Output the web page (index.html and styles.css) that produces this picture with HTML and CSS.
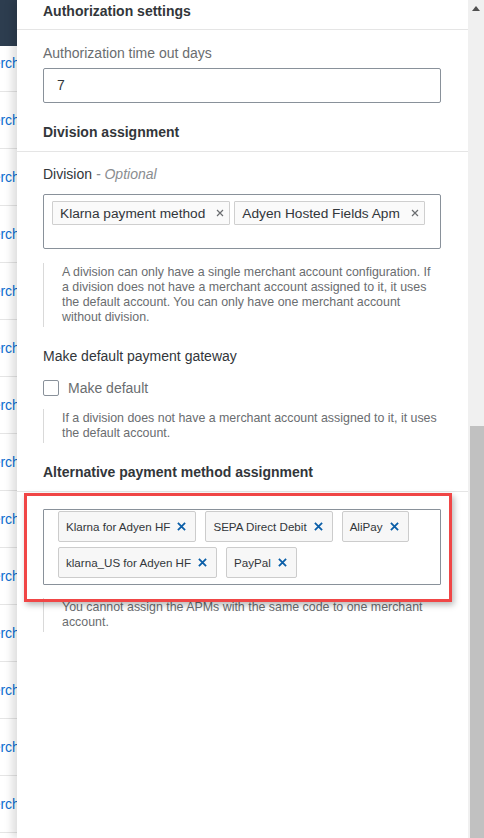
FILE: index.html
```html
<!DOCTYPE html>
<html lang="en">
<head>
<meta charset="utf-8">
<title>Payment gateway settings</title>
<link rel="stylesheet" href="styles.css">
</head>
<body>
<div class="page">
  <div class="page-header"></div>
  <div class="list">
    <div class="list-row first"><a class="link">Merchant account</a></div>
    <div class="list-row"><a class="link">Merchant account</a></div>
    <div class="list-row"><a class="link">Merchant account</a></div>
    <div class="list-row"><a class="link">Merchant account</a></div>
    <div class="list-row"><a class="link">Merchant account</a></div>
    <div class="list-row"><a class="link">Merchant account</a></div>
    <div class="list-row"><a class="link">Merchant account</a></div>
    <div class="list-row"><a class="link">Merchant account</a></div>
    <div class="list-row"><a class="link">Merchant account</a></div>
    <div class="list-row"><a class="link">Merchant account</a></div>
    <div class="list-row"><a class="link">Merchant account</a></div>
    <div class="list-row"><a class="link">Merchant account</a></div>
    <div class="list-row"><a class="link">Merchant account</a></div>
    <div class="list-row"><a class="link">Merchant account</a></div>
  </div>
</div>

<aside class="panel">
  <div class="panel-content">
    <h3 class="section-head first">Authorization settings</h3>
    <div class="section-body">
      <label class="field-label muted top">Authorization time out days</label>
      <div class="input">7</div>
    </div>

    <h3 class="section-head">Division assignment</h3>
    <div class="section-body">
      <label class="field-label division">Division <span class="optional">- Optional</span></label>
      <div class="multi-input">
        <span class="token">Klarna payment method
          <svg class="x-small" viewBox="0 0 8 8"><path d="M1 1L7 7M7 1L1 7"/></svg>
        </span>
        <span class="token">Adyen Hosted Fields Apm
          <svg class="x-small" viewBox="0 0 8 8"><path d="M1 1L7 7M7 1L1 7"/></svg>
        </span>
      </div>
      <p class="helper first-helper">A division can only have a single merchant account configuration. If a division does not have a merchant account assigned to it, it uses the default account. You can only have one merchant account without division.</p>

      <label class="field-label gateway">Make default payment gateway</label>
      <div class="check-row">
        <span class="checkbox"></span>
        <span class="check-text">Make default</span>
      </div>
      <p class="helper second-helper">If a division does not have a merchant account assigned to it, it uses the default account.</p>
    </div>

    <h3 class="section-head apm">Alternative payment method assignment</h3>
    <div class="section-body">
      <div class="apm-input">
        <span class="apm-token">Klarna for Adyen HF <svg class="x-blue" viewBox="0 0 10 10"><path d="M1 1L9 9M9 1L1 9"/></svg></span>
        <span class="apm-token">SEPA Direct Debit <svg class="x-blue" viewBox="0 0 10 10"><path d="M1 1L9 9M9 1L1 9"/></svg></span>
        <span class="apm-token">AliPay <svg class="x-blue" viewBox="0 0 10 10"><path d="M1 1L9 9M9 1L1 9"/></svg></span>
        <span class="apm-token">klarna_US for Adyen HF <svg class="x-blue" viewBox="0 0 10 10"><path d="M1 1L9 9M9 1L1 9"/></svg></span>
        <span class="apm-token">PayPal <svg class="x-blue" viewBox="0 0 10 10"><path d="M1 1L9 9M9 1L1 9"/></svg></span>
      </div>
      <p class="helper third-helper">You cannot assign the APMs with the same code to one merchant account.</p>
    </div>

    <div class="highlight"></div>
  </div>
  <div class="scrollbar">
    <svg class="scroll-arrow" viewBox="0 0 10 6"><path d="M5 0L10 6H0Z"/></svg>
    <div class="scroll-thumb"></div>
  </div>
</aside>
</body>
</html>
```
FILE: styles.css
```css
* { box-sizing: border-box; }

html, body {
  margin: 0;
  padding: 0;
  height: 100%;
}

body {
  font-family: "Liberation Sans", Arial, sans-serif;
  color: #32363a;
  background: #ffffff;
  overflow: hidden;
  position: relative;
}

/* background page */
.page {
  width: 100%;
}

.page-header {
  height: 46px;
  background: #2d3d4f;
}

.list-row {
  height: 57px;
  border-bottom: 1px solid #e5e5e5;
  display: flex;
  align-items: center;
  overflow: hidden;
  white-space: nowrap;
}

.list-row.first {
  height: 46px;
  align-items: flex-start;
  padding-top: 7px;
}

.link {
  margin-left: -19px;
  color: #0a6ed1;
  font-size: 14px;
  line-height: 20px;
}

/* side panel */
.panel {
  position: absolute;
  top: 0;
  left: 17px;
  right: 0;
  bottom: 0;
  display: flex;
  background: #ffffff;
  box-shadow: -5px 0 8px rgba(0, 0, 0, 0.13);
}

.panel-content {
  flex: 1;
  position: relative;
  overflow: hidden;
}

.section-head {
  margin: 19px 0 0;
  padding: 0 26px 9px;
  font-size: 14px;
  line-height: 20px;
  font-weight: bold;
  color: #32363a;
  border-bottom: 1px solid #e5e5e5;
}

.section-head.first {
  margin-top: 0;
  padding-top: 1px;
  padding-bottom: 8px;
}

.section-body {
  padding: 0 27px 0 26px;
}

.field-label {
  display: block;
  font-size: 14px;
  line-height: 20px;
  color: #32363a;
}

.field-label.muted { color: #6a6d70; }
.field-label.top { margin-top: 13px; }
.field-label.division { margin-top: 12px; }
.field-label.gateway { margin-top: 19px; }

.optional {
  font-style: italic;
  color: #8a8d90;
}

.input {
  margin-top: 5px;
  height: 35px;
  border: 1px solid #89919a;
  border-radius: 2px;
  padding-left: 13px;
  font-size: 14px;
  line-height: 33px;
  color: #32363a;
}

.multi-input {
  margin-top: 10px;
  height: 55px;
  border: 1px solid #89919a;
  border-radius: 2px;
  padding: 6px 8px;
  display: flex;
  flex-wrap: wrap;
  align-content: flex-start;
  gap: 4px;
}

.token {
  height: 24px;
  display: inline-flex;
  align-items: center;
  gap: 11px;
  padding: 0 5px 0 7px;
  background: #fafafa;
  border: 1px solid #cfcfcf;
  border-radius: 1px;
  font-size: 13.7px;
  color: #32363a;
}

.x-small {
  width: 8px;
  height: 8px;
  stroke: #6a6d70;
  stroke-width: 1.2;
  fill: none;
}

.helper {
  margin: 14px 0 0;
  padding: 2px 3px 2px 18px;
  border-left: 1px solid #d9d9d9;
  font-size: 12.4px;
  line-height: 15px;
  color: #6a6d70;
}

.second-helper { margin-top: 11px; }
.third-helper { margin-top: 13px; }

.check-row {
  margin-top: 12px;
  display: flex;
  align-items: center;
  height: 20px;
}

.checkbox {
  width: 16px;
  height: 16px;
  border: 1px solid #89919a;
  border-radius: 2px;
  background: #ffffff;
}

.check-text {
  margin-left: 9px;
  font-size: 14px;
  line-height: 20px;
  color: #6a6d70;
}

.apm-input {
  margin-top: 17px;
  height: 76px;
  border: 1px solid #89919a;
  border-radius: 1px;
  padding: 1px 13px 6px 14px;
  display: flex;
  flex-wrap: wrap;
  align-content: flex-start;
  column-gap: 9px;
  row-gap: 5px;
}

.apm-token {
  height: 31px;
  display: inline-flex;
  align-items: center;
  gap: 7px;
  padding: 0 9px 0 7px;
  background: #f7f7f7;
  border: 1px solid #cccccc;
  border-radius: 2px;
  font-size: 11.6px;
  color: #32363a;
}

.x-blue {
  width: 9px;
  height: 9px;
  stroke: #0a5ea8;
  stroke-width: 2;
  fill: none;
}

/* annotation overlay */
.highlight {
  position: absolute;
  left: 7px;
  top: 493px;
  width: 428px;
  height: 109px;
  border: 3px solid #f04646;
  box-shadow: 2px 3px 6px rgba(0, 0, 0, 0.28);
  pointer-events: none;
}

/* scrollbar */
.scrollbar {
  width: 16px;
  background: #f0f0f0;
  display: flex;
  flex-direction: column;
  align-items: center;
}

.scroll-arrow {
  width: 8px;
  height: 5px;
  margin-top: 6px;
  fill: #505050;
}

.scroll-thumb {
  margin-top: auto;
  align-self: flex-end;
  width: 14px;
  height: 412px;
  background: #c1c1c1;
}
```
